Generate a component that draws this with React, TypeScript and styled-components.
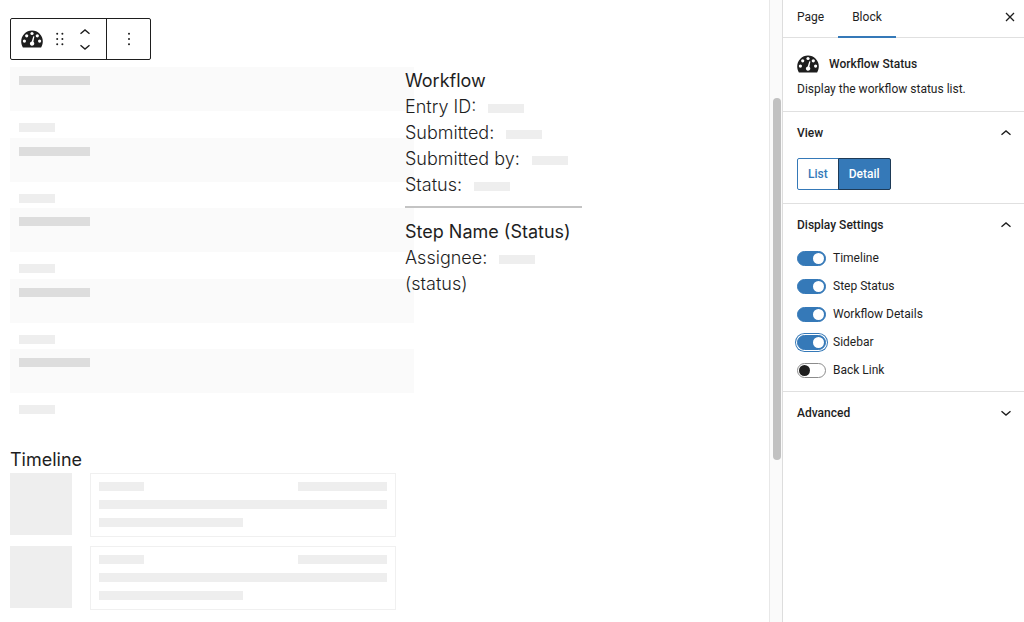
import React, { useState } from "react";
import styled, { createGlobalStyle, css } from "styled-components";

const GlobalStyle = createGlobalStyle`
  *, *::before, *::after { box-sizing: border-box; }
  body { margin: 0; background: #fff; color: #1e1e1e; }
  button, input { font: inherit; color: inherit; margin: 0; }
  h1, h2, h3, p { margin: 0; }
`;

const Shell = styled.div`
  display: grid;
  grid-template-columns: minmax(0, 1fr) 13px 242px;
  height: 100vh;
  overflow: hidden;
  font-family: Inter, "Liberation Sans", sans-serif;
`;

const Canvas = styled.main`
  padding: 18px 10px 0;
  overflow: hidden;
  font-size: 18px;
  line-height: 26px;
`;

const Toolbar = styled.div`
  display: flex;
  width: max-content;
  height: 42px;
  border: 1px solid #1e1e1e;
  border-radius: 2px;
  background: #fff;
`;

const ToolbarGroup = styled.div`
  display: flex;
  align-items: center;
  & + & { border-left: 1px solid #1e1e1e; }
`;

const IconButton = styled.button<{ $width: number }>`
  display: flex;
  align-items: center;
  justify-content: center;
  width: ${(p) => p.$width}px;
  height: 100%;
  padding: 0;
  border: 0;
  background: none;
`;

const Movers = styled.div`
  display: flex;
  flex-direction: column;
  width: 36px;
  height: 30px;
  margin-right: 3px;
`;

const Columns = styled.div`
  display: grid;
  grid-template-columns: 386px 177px;
  gap: 9px;
  margin-top: 7px;
`;

const Fields = styled.div`
  display: grid;
  grid-template-rows: repeat(5, 1fr);
  height: 353px;
`;

const FieldLabel = styled.div`
  box-sizing: content-box;
  width: 100%;
  height: 26px;
  padding: 9px;
  background: #fafafa;
`;

const FieldValue = styled.div`
  padding: 12px 9px 0;
`;

const Bar = styled.div<{ $width?: number; $dark?: boolean }>`
  width: ${(p) => (p.$width ? `${p.$width}px` : "100%")};
  height: 9px;
  background: ${(p) => (p.$dark ? "#ddd" : "#eee")};
`;

const Details = styled.div`
  padding-top: 1px;
`;

const InlineBar = styled.span`
  display: inline-block;
  width: 36px;
  height: 9px;
  margin-left: 7px;
  background: #eee;
`;

const Title = styled.h3`
  font-size: inherit;
  font-weight: 400;
  white-space: nowrap;
`;

const Line = styled.p`
  font-weight: 300;
`;

const Rule = styled.hr`
  height: 2px;
  margin: 8px 0 11px;
  border: 0;
  background: #c4c4c4;
`;

const Timeline = styled.section`
  display: flex;
  flex-direction: column;
  width: 386px;
  margin-top: 27px;
`;

const TimelineList = styled.div`
  display: flex;
  flex-direction: column;
  gap: 9px;
`;

const TimelineItem = styled.div`
  display: flex;
  align-items: flex-start;
  gap: 18px;
`;

const Avatar = styled.div`
  width: 62px;
  height: 62px;
  background: #eee;
`;

const Card = styled.div`
  display: flex;
  flex: 1;
  flex-direction: column;
  gap: 9px;
  height: 64px;
  padding: 8px;
  border: 1px solid #f0f0f0;
`;

const CardHead = styled.div`
  display: flex;
  justify-content: space-between;
`;

const Track = styled.div`
  padding: 98px 1px 0 3px;
  border-left: 1px solid #e8e8e8;
  background: #fafafa;
`;

const Thumb = styled.div`
  width: 8px;
  height: 362px;
  border-radius: 4px;
  background: #c1c1c1;
`;

const Sidebar = styled.aside`
  border-left: 1px solid #ddd;
  background: #fff;
  font-family: Roboto, "Liberation Sans", sans-serif;
  font-size: 12px;
  line-height: 16px;
`;

const Tabs = styled.div`
  display: flex;
  height: 38px;
  border-bottom: 1px solid #e0e0e0;
`;

const Tab = styled.button<{ $active?: boolean }>`
  height: 38px;
  padding: 0 14px 2px;
  border: 0;
  border-bottom: 2px solid ${(p) => (p.$active ? "#3579b8" : "transparent")};
  background: none;
`;

const Close = styled(IconButton)`
  margin-left: auto;
  padding-bottom: 4px;
`;

const Section = styled.section`
  padding: 0 13px 0 14px;
  & + & { border-top: 1px solid #e0e0e0; }
`;

const BlockCard = styled(Section)`
  height: 73px;
  padding-top: 17px;
`;

const BlockName = styled.h2`
  display: flex;
  align-items: center;
  gap: 10px;
  height: 18px;
  margin-bottom: 8px;
  font-size: 12px;
  font-weight: 500;
`;

const PanelToggle = styled.button`
  display: flex;
  align-items: center;
  justify-content: space-between;
  width: 100%;
  height: 42px;
  padding: 0;
  border: 0;
  background: none;
  font-weight: 500;
`;

const Segments = styled.div`
  display: flex;
  width: max-content;
  height: 32px;
  margin: 4px 0 13px;
`;

const Segment = styled.button<{ $active?: boolean }>`
  padding: 0 10px;
  border: 1px solid #3579b8;
  border-radius: 2px 0 0 2px;
  background: #fff;
  color: #3579b8;
  font-weight: 500;
  ${(p) =>
    p.$active &&
    css`
      margin-left: -1px;
      border-color: #1e3a56;
      border-radius: 0 2px 2px 0;
      background: #3579b8;
      color: #fff;
    `}
`;

const Switches = styled.div`
  display: flex;
  flex-direction: column;
  gap: 12px;
  padding: 4px 0 13px;
`;

const SwitchRow = styled.label`
  display: flex;
  align-items: center;
  gap: 7px;
  height: 16px;
`;

const Switch = styled.input<{ $ring?: boolean }>`
  appearance: none;
  display: flex;
  align-items: center;
  width: 29px;
  height: 15px;
  padding: 0 1px;
  border: 1px solid #8c8c8c;
  border-radius: 8px;
  background: #fff;
  &::before {
    content: "";
    width: 11px;
    height: 11px;
    border-radius: 50%;
    background: #1e1e1e;
  }
  &:checked {
    justify-content: flex-end;
    border-color: #3579b8;
    background: #3579b8;
  }
  &:checked::before { background: #fff; }
  ${(p) =>
    p.$ring &&
    css`
      box-shadow: 0 0 0 1px #fff, 0 0 0 2px #3579b8;
    `}
`;

const GaugeIcon = () => (
  <svg width="22" height="18" viewBox="0 0 22 18" aria-hidden="true">
    <path d="M1.9 17.4C.8 15.6.2 13.5.2 11.4a10.8 10.8 0 0 1 21.6 0c0 2.1-.6 4.2-1.7 6Z" fill="#1e1e1e" />
    <g fill="#fff">
      <circle cx="11" cy="3.5" r="1.6" />
      <circle cx="5.7" cy="5.8" r="1.6" />
      <circle cx="16.3" cy="5.8" r="1.6" />
      <circle cx="3.4" cy="11.1" r="1.6" />
      <circle cx="18.6" cy="11.1" r="1.6" />
      <path d="M12.3 6.2 13.4 6.5 12.4 11.8A2.2 2.2 0 1 1 10.7 11.4Z" />
    </g>
  </svg>
);

const DragIcon = () => (
  <svg width="10" height="14" viewBox="0 0 10 14" fill="#1e1e1e" aria-hidden="true">
    {[1.8, 7, 12.2].map((y) => (
      <React.Fragment key={y}>
        <circle cx="2.2" cy={y} r="1" />
        <circle cx="7.4" cy={y} r="1" />
      </React.Fragment>
    ))}
  </svg>
);

const DotsIcon = () => (
  <svg width="4" height="14" viewBox="0 0 4 14" fill="#1e1e1e" aria-hidden="true">
    {[1.8, 7, 12.2].map((y) => (
      <circle key={y} cx="2" cy={y} r="1" />
    ))}
  </svg>
);

const Chevron = ({ up }: { up?: boolean }) => (
  <svg width="10" height="6" viewBox="0 0 10 6" fill="none" stroke="#1e1e1e" strokeWidth="1.4" aria-hidden="true">
    <path d={up ? "M.5 4.7 5 1 9.5 4.7" : "M.5 1.3 5 5 9.5 1.3"} />
  </svg>
);

const CloseIcon = () => (
  <svg width="10" height="10" viewBox="0 0 10 10" stroke="#1e1e1e" strokeWidth="1.3" aria-hidden="true">
    <path d="M1 1 9 9M9 1 1 9" />
  </svg>
);

const settings = ["Timeline", "Step Status", "Workflow Details", "Sidebar", "Back Link"];

export default function App() {
  const [on, setOn] = useState([true, true, true, true, false]);
  const flip = (i: number) => setOn(on.map((v, n) => (n === i ? !v : v)));

  return (
    <>
      <GlobalStyle />
      <Shell>
        <Canvas>
          <Toolbar role="toolbar" aria-label="Block tools">
            <ToolbarGroup>
              <IconButton $width={42} aria-label="Workflow Status"><GaugeIcon /></IconButton>
              <IconButton $width={14} aria-label="Drag"><DragIcon /></IconButton>
              <Movers>
                <IconButton $width={36} aria-label="Move up"><Chevron up /></IconButton>
                <IconButton $width={36} aria-label="Move down"><Chevron /></IconButton>
              </Movers>
            </ToolbarGroup>
            <ToolbarGroup>
              <IconButton $width={43} aria-label="Options"><DotsIcon /></IconButton>
            </ToolbarGroup>
          </Toolbar>

          <Columns>
            <Fields>
              {settings.map((s) => (
                <div key={s}>
                  <FieldLabel><Bar $width={71} $dark /></FieldLabel>
                  <FieldValue><Bar $width={36} /></FieldValue>
                </div>
              ))}
            </Fields>
            <Details>
              <Title>Workflow</Title>
              <Line>Entry ID: <InlineBar /></Line>
              <Line>Submitted: <InlineBar /></Line>
              <Line>Submitted by: <InlineBar /></Line>
              <Line>Status: <InlineBar /></Line>
              <Rule />
              <Title>Step Name (Status)</Title>
              <Line>Assignee: <InlineBar /></Line>
              <Line>(status)</Line>
            </Details>
          </Columns>

          <Timeline>
            <Title>Timeline</Title>
            <TimelineList>
              {[0, 1].map((n) => (
                <TimelineItem key={n}>
                  <Avatar />
                  <Card>
                    <CardHead><Bar $width={45} /><Bar $width={89} /></CardHead>
                    <Bar />
                    <Bar $width={144} />
                  </Card>
                </TimelineItem>
              ))}
            </TimelineList>
          </Timeline>
        </Canvas>

        <Track><Thumb /></Track>

        <Sidebar>
          <Tabs role="tablist">
            <Tab role="tab" aria-selected={false}>Page</Tab>
            <Tab role="tab" aria-selected $active>Block</Tab>
            <Close $width={28} aria-label="Close settings"><CloseIcon /></Close>
          </Tabs>
          <BlockCard>
            <BlockName><GaugeIcon />Workflow Status</BlockName>
            <p>Display the workflow status list.</p>
          </BlockCard>
          <Section>
            <PanelToggle aria-expanded>View<Chevron up /></PanelToggle>
            <Segments>
              <Segment>List</Segment>
              <Segment $active aria-pressed>Detail</Segment>
            </Segments>
          </Section>
          <Section>
            <PanelToggle aria-expanded>Display Settings<Chevron up /></PanelToggle>
            <Switches>
              {settings.map((label, i) => (
                <SwitchRow key={label}>
                  <Switch type="checkbox" role="switch" checked={on[i]} onChange={() => flip(i)} $ring={label === "Sidebar"} />
                  {label}
                </SwitchRow>
              ))}
            </Switches>
          </Section>
          <Section>
            <PanelToggle aria-expanded={false}>Advanced<Chevron /></PanelToggle>
          </Section>
        </Sidebar>
      </Shell>
    </>
  );
}
